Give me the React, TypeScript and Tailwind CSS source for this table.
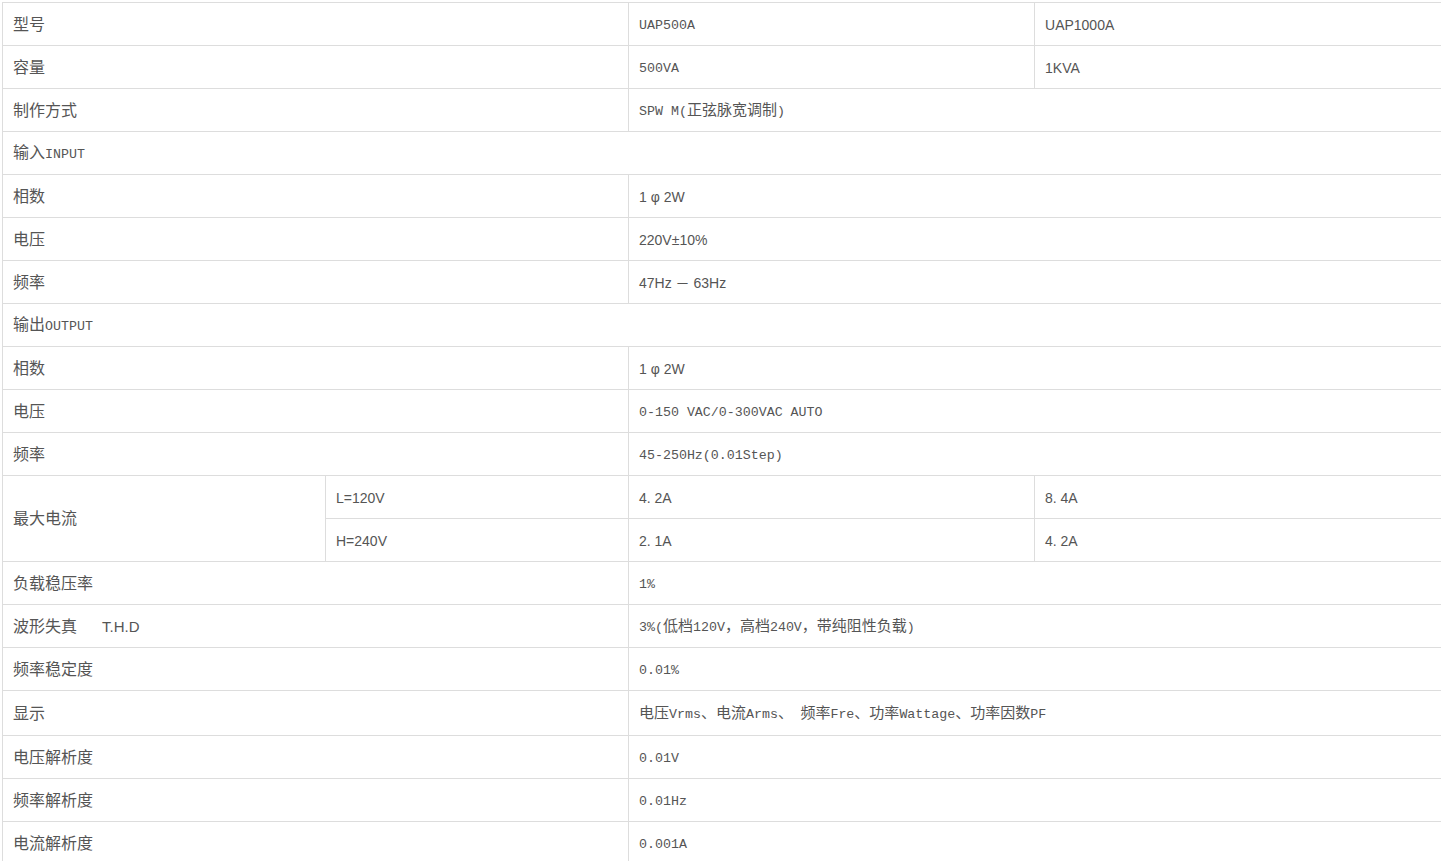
import React from "react";

const SANS = "font-['Liberation_Sans','Noto_Sans_CJK_SC',sans-serif] text-[14px]";
const LABEL = "font-['Liberation_Sans','Noto_Sans_CJK_SC',sans-serif] text-[16px]";

function Mixed({ text, big = true }: { text: string; big?: boolean }) {
  const parts = text.split(/([\u0000-\u007f]+)/).filter((p) => p.length > 0);
  return (
    <>
      {parts.map((p, i) =>
        /^[\u0000-\u007f]+$/.test(p) ? (
          <span key={i} className="font-['Liberation_Mono',monospace] text-[13.3px] whitespace-pre">
            {p}
          </span>
        ) : (
          <span
            key={i}
            className={
              big
                ? "font-['Noto_Sans_CJK_SC',sans-serif] text-[15px]"
                : "font-['Noto_Sans_CJK_SC',sans-serif] text-[16px]"
            }
          >
            {p}
          </span>
        )
      )}
    </>
  );
}

type Cell = {
  content: React.ReactNode;
  colSpan?: number;
  rowSpan?: number;
};

const td = "border border-[#dddddd] px-[10px] align-middle text-left text-[#555555] leading-[20px]";

function L({ t }: { t: string }) {
  return <span className={LABEL}>{t}</span>;
}
function A({ t }: { t: string }) {
  return <span className={SANS + " whitespace-pre"}>{t}</span>;
}
function M({ t }: { t: string }) {
  return <Mixed text={t} />;
}

const rows: { h: string; cells: Cell[] }[] = [
  { h: "h-[43px]", cells: [{ content: <L t="型号" />, colSpan: 2 }, { content: <M t="UAP500A" /> }, { content: <A t="UAP1000A" /> }] },
  { h: "h-[43px]", cells: [{ content: <L t="容量" />, colSpan: 2 }, { content: <M t="500VA" /> }, { content: <A t="1KVA" /> }] },
  { h: "h-[43px]", cells: [{ content: <L t="制作方式" />, colSpan: 2 }, { content: <M t="SPW M(正弦脉宽调制)" />, colSpan: 2 }] },
  { h: "h-[43px]", cells: [{ content: <Mixed text="输入INPUT" big={false} />, colSpan: 4 }] },
  { h: "h-[43px]", cells: [{ content: <L t="相数" />, colSpan: 2 }, { content: <A t="1 φ 2W" />, colSpan: 2 }] },
  { h: "h-[43px]", cells: [{ content: <L t="电压" />, colSpan: 2 }, { content: <A t="220V±10%" />, colSpan: 2 }] },
  { h: "h-[43px]", cells: [{ content: <L t="频率" />, colSpan: 2 }, { content: <A t="47Hz － 63Hz" />, colSpan: 2 }] },
  { h: "h-[43px]", cells: [{ content: <Mixed text="输出OUTPUT" big={false} />, colSpan: 4 }] },
  { h: "h-[43px]", cells: [{ content: <L t="相数" />, colSpan: 2 }, { content: <A t="1 φ 2W" />, colSpan: 2 }] },
  { h: "h-[43px]", cells: [{ content: <L t="电压" />, colSpan: 2 }, { content: <M t="0-150 VAC/0-300VAC AUTO" />, colSpan: 2 }] },
  { h: "h-[43px]", cells: [{ content: <L t="频率" />, colSpan: 2 }, { content: <M t="45-250Hz(0.01Step)" />, colSpan: 2 }] },
  {
    h: "h-[43px]",
    cells: [
      { content: <L t="最大电流" />, rowSpan: 2 },
      { content: <A t="L=120V" /> },
      { content: <A t="4. 2A" /> },
      { content: <A t="8. 4A" /> },
    ],
  },
  { h: "h-[43px]", cells: [{ content: <A t="H=240V" /> }, { content: <A t="2. 1A" /> }, { content: <A t="4. 2A" /> }] },
  { h: "h-[43px]", cells: [{ content: <L t="负载稳压率" />, colSpan: 2 }, { content: <M t="1%" />, colSpan: 2 }] },
  {
    h: "h-[43px]",
    cells: [
      {
        content: (
          <>
            <span className={LABEL}>波形失真</span>
            <span className="font-['Liberation_Sans',sans-serif] text-[15px] whitespace-pre">{"      T.H.D"}</span>
          </>
        ),
        colSpan: 2,
      },
      { content: <M t="3%(低档120V，高档240V，带纯阻性负载)" />, colSpan: 2 },
    ],
  },
  { h: "h-[43px]", cells: [{ content: <L t="频率稳定度" />, colSpan: 2 }, { content: <M t="0.01%" />, colSpan: 2 }] },
  { h: "h-[45px]", cells: [{ content: <L t="显示" />, colSpan: 2 }, { content: <M t="电压Vrms、电流Arms、　频率Fre、功率Wattage、功率因数PF" />, colSpan: 2 }] },
  { h: "h-[43px]", cells: [{ content: <L t="电压解析度" />, colSpan: 2 }, { content: <M t="0.01V" />, colSpan: 2 }] },
  { h: "h-[43px]", cells: [{ content: <L t="频率解析度" />, colSpan: 2 }, { content: <M t="0.01Hz" />, colSpan: 2 }] },
  { h: "h-[43px]", cells: [{ content: <L t="电流解析度" />, colSpan: 2 }, { content: <M t="0.001A" />, colSpan: 2 }] },
];

export default function App() {
  return (
    <div className="min-h-screen bg-white pl-[2px] pt-[2px]">
      <table className="border-collapse table-fixed w-[1439px] bg-white">
        <colgroup>
          <col className="w-[323px]" />
          <col className="w-[303px]" />
          <col className="w-[406px]" />
          <col className="w-[407px]" />
        </colgroup>
        <tbody>
          {rows.map((r, i) => (
            <tr key={i} className={r.h}>
              {r.cells.map((c, j) => (
                <td key={j} colSpan={c.colSpan} rowSpan={c.rowSpan} className={td}>
                  {c.content}
                </td>
              ))}
            </tr>
          ))}
        </tbody>
      </table>
    </div>
  );
}
